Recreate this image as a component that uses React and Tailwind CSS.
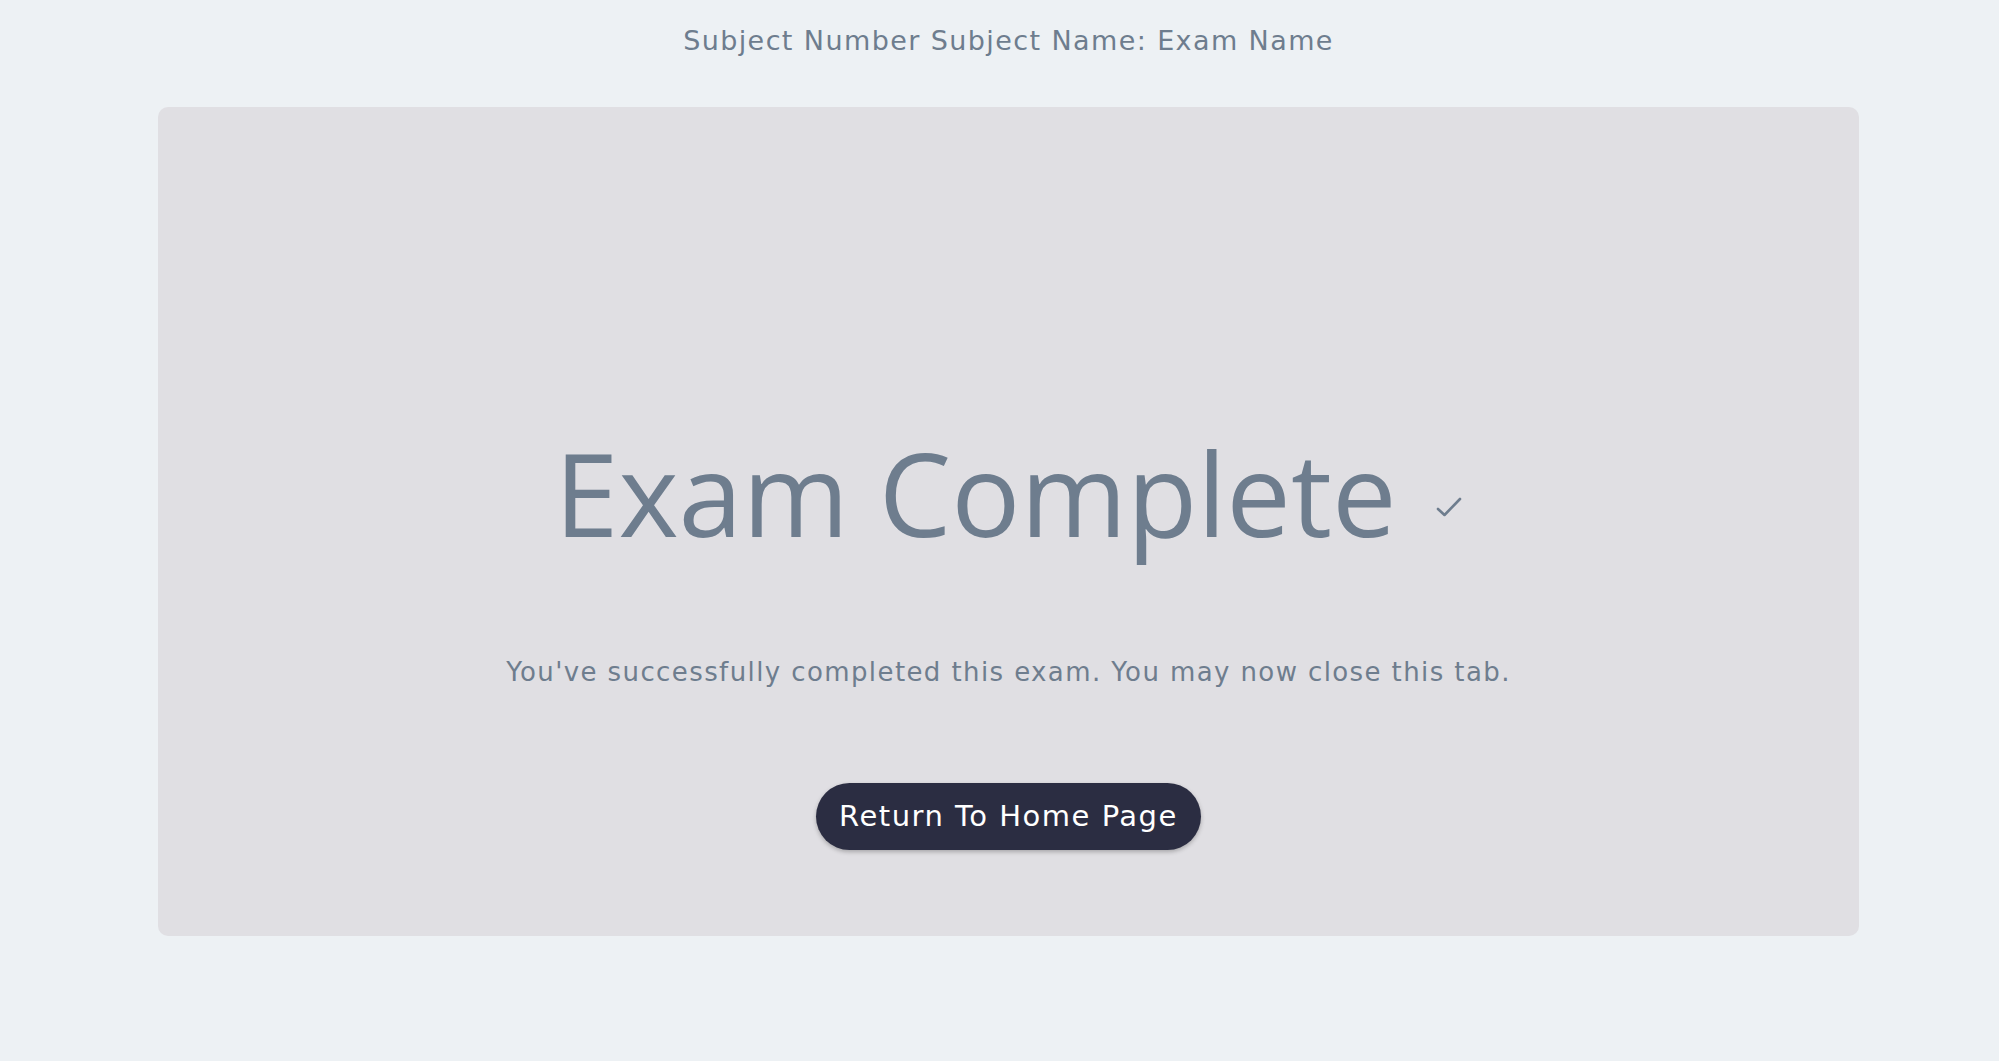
export default function App() {
  return (
    <div className="min-h-[1061px] w-full bg-[#edf1f4] pl-[158px] pr-[140px]" style={{ fontFamily: '"DejaVu Sans", "Noto Sans", sans-serif' }}>
      <div className="flex h-[82px] items-center justify-center">
        <span className="text-[27px] leading-[34px] tracking-[1.4px] text-[#6e7d8e]">Subject Number Subject Name: Exam Name</span>
      </div>
      <div className="mt-[25px] flex h-[829px] flex-col items-center rounded-[10px] bg-[#e0dfe3] pt-[325px]">
        <div className="flex items-start">
          <h1 className="text-[115px] font-normal leading-[122px] text-[#6e7d8e]" style={{ fontFamily: '"Open Sans", "Noto Sans", sans-serif' }}>Exam Complete</h1>
          <svg className="ml-[40px] mt-[65px]" width="26" height="20" viewBox="0 0 26 20" fill="none" stroke="#6e7d8e" strokeWidth="2.6" strokeLinecap="round" strokeLinejoin="round">
            <path d="M2 12 L8.5 18 L24 2" />
          </svg>
        </div>
        <p className="mt-[98px] text-[26px] leading-[40px] tracking-[1.4px] text-[#6e7d8e]">You've successfully completed this exam. You may now close this tab.</p>
        <button className="mt-[91px] flex h-[67px] w-[385px] items-center justify-center rounded-full bg-[#2b2d42] text-[29px] tracking-[1.5px] text-white shadow-[0_2px_4px_rgba(0,0,0,0.25)]">
          Return To Home Page
        </button>
      </div>
    </div>
  );
}
